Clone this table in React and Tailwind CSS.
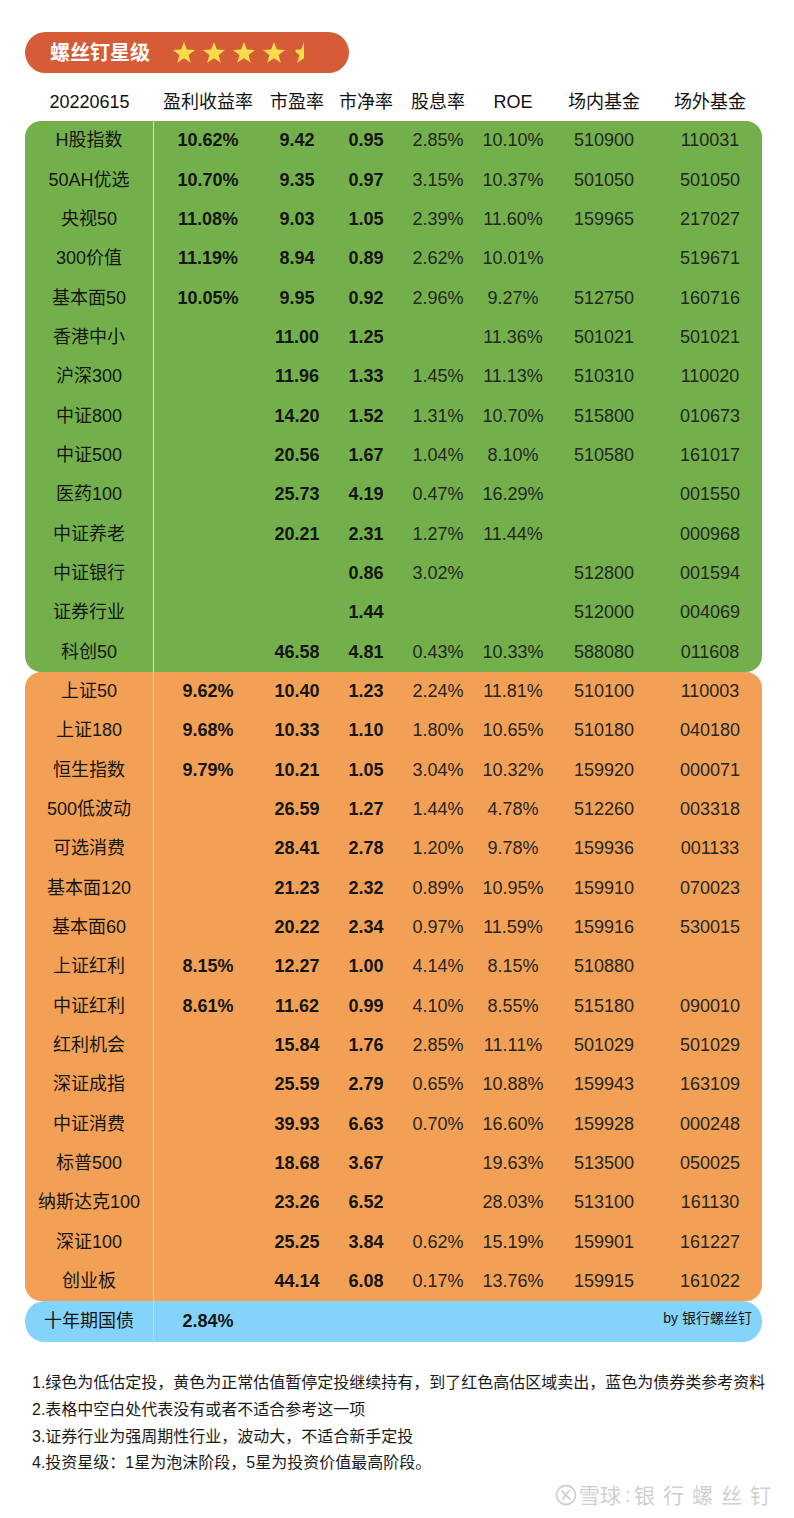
import React from "react";

const green = [
  ["H股指数", "10.62%", "9.42", "0.95", "2.85%", "10.10%", "510900", "110031"],
  ["50AH优选", "10.70%", "9.35", "0.97", "3.15%", "10.37%", "501050", "501050"],
  ["央视50", "11.08%", "9.03", "1.05", "2.39%", "11.60%", "159965", "217027"],
  ["300价值", "11.19%", "8.94", "0.89", "2.62%", "10.01%", "", "519671"],
  ["基本面50", "10.05%", "9.95", "0.92", "2.96%", "9.27%", "512750", "160716"],
  ["香港中小", "", "11.00", "1.25", "", "11.36%", "501021", "501021"],
  ["沪深300", "", "11.96", "1.33", "1.45%", "11.13%", "510310", "110020"],
  ["中证800", "", "14.20", "1.52", "1.31%", "10.70%", "515800", "010673"],
  ["中证500", "", "20.56", "1.67", "1.04%", "8.10%", "510580", "161017"],
  ["医药100", "", "25.73", "4.19", "0.47%", "16.29%", "", "001550"],
  ["中证养老", "", "20.21", "2.31", "1.27%", "11.44%", "", "000968"],
  ["中证银行", "", "", "0.86", "3.02%", "", "512800", "001594"],
  ["证券行业", "", "", "1.44", "", "", "512000", "004069"],
  ["科创50", "", "46.58", "4.81", "0.43%", "10.33%", "588080", "011608"],
];

const orange = [
  ["上证50", "9.62%", "10.40", "1.23", "2.24%", "11.81%", "510100", "110003"],
  ["上证180", "9.68%", "10.33", "1.10", "1.80%", "10.65%", "510180", "040180"],
  ["恒生指数", "9.79%", "10.21", "1.05", "3.04%", "10.32%", "159920", "000071"],
  ["500低波动", "", "26.59", "1.27", "1.44%", "4.78%", "512260", "003318"],
  ["可选消费", "", "28.41", "2.78", "1.20%", "9.78%", "159936", "001133"],
  ["基本面120", "", "21.23", "2.32", "0.89%", "10.95%", "159910", "070023"],
  ["基本面60", "", "20.22", "2.34", "0.97%", "11.59%", "159916", "530015"],
  ["上证红利", "8.15%", "12.27", "1.00", "4.14%", "8.15%", "510880", ""],
  ["中证红利", "8.61%", "11.62", "0.99", "4.10%", "8.55%", "515180", "090010"],
  ["红利机会", "", "15.84", "1.76", "2.85%", "11.11%", "501029", "501029"],
  ["深证成指", "", "25.59", "2.79", "0.65%", "10.88%", "159943", "163109"],
  ["中证消费", "", "39.93", "6.63", "0.70%", "16.60%", "159928", "000248"],
  ["标普500", "", "18.68", "3.67", "", "19.63%", "513500", "050025"],
  ["纳斯达克100", "", "23.26", "6.52", "", "28.03%", "513100", "161130"],
  ["深证100", "", "25.25", "3.84", "0.62%", "15.19%", "159901", "161227"],
  ["创业板", "", "44.14", "6.08", "0.17%", "13.76%", "159915", "161022"],
];

const GRID = "grid grid-cols-[129px_108px_70px_68px_76px_74px_108px_104px] items-center text-center";

function Star({ half }) {
  return (
    <svg width="24" height="24" viewBox="0 0 24 24" className="shrink-0">
      {half && (
        <defs>
          <clipPath id="halfclip">
            <rect x="3.6" y="0" width="8.4" height="24" />
          </clipPath>
        </defs>
      )}
      <polygon
        points="12,1 14.9,8.6 23,8.9 16.6,13.9 18.8,21.8 12,17.3 5.2,21.8 7.4,13.9 1,8.9 9.1,8.6"
        fill="#f8dc4c"
        clipPath={half ? "url(#halfclip)" : undefined}
      />
    </svg>
  );
}

function Row({ r }) {
  return (
    <div className={`${GRID} h-[39.35px] text-[18px] text-[#161616]`}>
      <div className="h-full flex items-center justify-center border-r border-[#d6d9d2]">{r[0]}</div>
      <div className="font-bold">{r[1]}</div>
      <div className="font-bold">{r[2]}</div>
      <div className="font-bold">{r[3]}</div>
      <div className="text-[#262626]">{r[4]}</div>
      <div className="text-[#262626]">{r[5]}</div>
      <div className="text-[#262626]">{r[6]}</div>
      <div className="text-[#262626]">{r[7]}</div>
    </div>
  );
}

function Logo() {
  return (
    <svg width="22" height="22" viewBox="0 0 22 22" fill="none" stroke="#d0d0d0" strokeWidth="1.8">
      <circle cx="11" cy="11" r="9.5" />
      <path d="M6.5 6.5 C9 9, 12 13, 15.5 15.5" />
      <path d="M15.5 6.5 C12.5 8, 9 11.5, 8 16" />
    </svg>
  );
}

export default function App() {
  return (
    <div className="w-[794px] h-[1518px] overflow-hidden bg-white pt-[32px] pl-[25px] pr-[32px] font-['Liberation_Sans','Noto_Sans_CJK_SC',sans-serif]">
      <div className="w-[324px] h-[41px] rounded-full bg-[#d65b37] flex items-center pl-[25px]">
        <span className="text-white font-bold text-[20px] leading-none">螺丝钉星级</span>
        <div className="flex items-center gap-[6px] ml-[22px]">
          <Star />
          <Star />
          <Star />
          <Star />
          <Star half />
        </div>
      </div>

      <div className={`${GRID} mt-[10px] h-[38px] text-[18px] text-[#111]`}>
        <div>20220615</div>
        <div>盈利收益率</div>
        <div>市盈率</div>
        <div>市净率</div>
        <div>股息率</div>
        <div>ROE</div>
        <div>场内基金</div>
        <div>场外基金</div>
      </div>

      <div className="rounded-[16px] bg-[#73b04b]">
        {green.map((r, i) => (
          <Row key={i} r={r} />
        ))}
      </div>
      <div className="rounded-[16px] bg-[#f2a055]">
        {orange.map((r, i) => (
          <Row key={i} r={r} />
        ))}
      </div>
      <div className={`${GRID} h-[41px] rounded-[20px] bg-[#84d3f8] text-[18px] text-[#161616]`}>
        <div className="h-full flex items-center justify-center border-r border-[#d6d9d2]">十年期国债</div>
        <div className="font-bold">2.84%</div>
        <div className="col-span-6 flex justify-end pr-[10px] pb-[6px] text-[14px]">by 银行螺丝钉</div>
      </div>

      <div className="mt-[28px] pl-[7px] text-[16px] leading-[26.7px] text-[#1a1a1a] whitespace-nowrap">
        <div>1.绿色为低估定投，黄色为正常估值暂停定投继续持有，到了红色高估区域卖出，蓝色为债券类参考资料</div>
        <div>2.表格中空白处代表没有或者不适合参考这一项</div>
        <div>3.证券行业为强周期性行业，波动大，不适合新手定投</div>
        <div>4.投资星级：1星为泡沫阶段，5星为投资价值最高阶段。</div>
      </div>

      <div className="mt-[5px] mr-[-17px] flex justify-end items-center h-[26px] leading-none text-[#d0d0d0]">
        <Logo />
        <span className="ml-[2px] text-[21px]">雪球</span>
        <span className="w-[13px] text-center text-[20px]">:</span>
        <span className="tracking-[8px] text-[21px]">银行螺丝钉</span>
      </div>
    </div>
  );
}
